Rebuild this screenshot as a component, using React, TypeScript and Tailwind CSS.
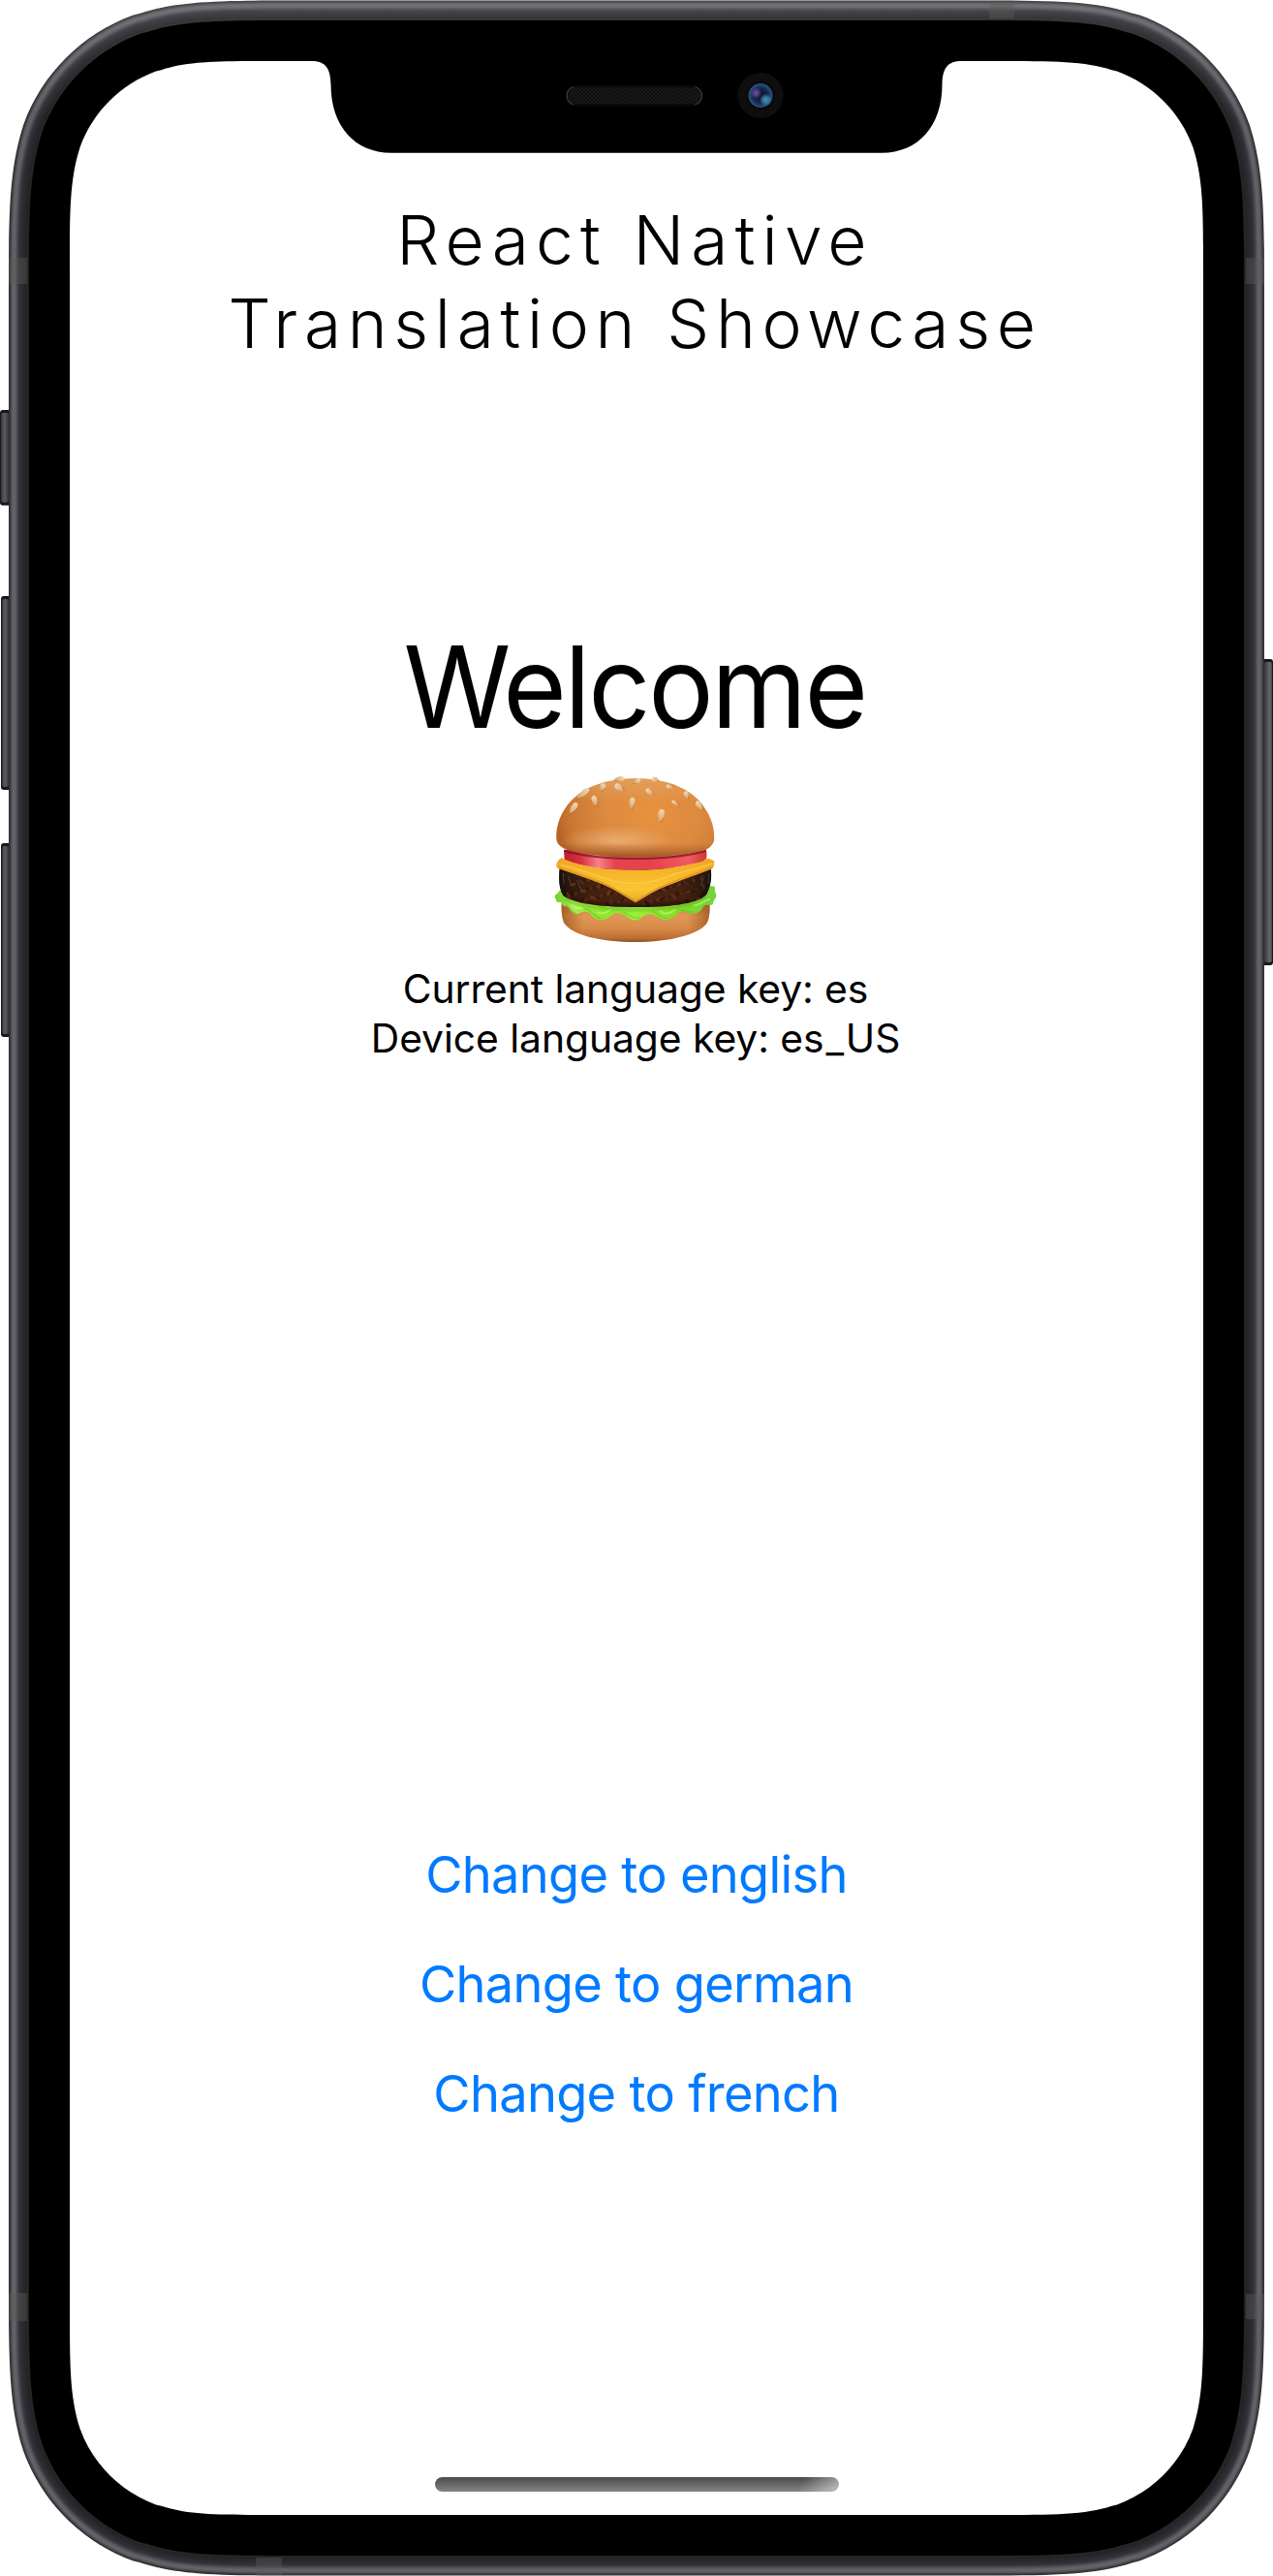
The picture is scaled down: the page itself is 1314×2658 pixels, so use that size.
import type { ReactNode } from 'react';

const FRAME_W = 1314;
const FRAME_H = 2658;

type Point = [number, number];

/** One smoothed corner, in units of the corner radius, from the horizontal edge to the vertical one. */
const CORNER: Point[] = [
  [1.52866, 0],
  [1.08849, 0],
  [0.8684, 0],
  [0.66993, 0.0655],
  [0.63149, 0.07491],
  [0.37282, 0.16906],
  [0.16906, 0.37282],
  [0.07491, 0.63149],
  [0, 0.8684],
  [0, 1.08849],
  [0, 1.52866],
];

/** Rounded rectangle with continuous (smoothed) corners. */
function squircle(x0: number, y0: number, x1: number, y1: number, r: number) {
  const corner = (map: (p: Point) => Point, reverse: boolean) => {
    const p = CORNER.map((c) => map(c).map((v) => v.toFixed(2)).join(' '));
    return reverse
      ? `${p[10]}C${p[9]} ${p[8]} ${p[7]}C${p[6]} ${p[5]} ${p[4]}L${p[3]}C${p[2]} ${p[1]} ${p[0]}`
      : `${p[0]}C${p[1]} ${p[2]} ${p[3]}L${p[4]}C${p[5]} ${p[6]} ${p[7]}C${p[8]} ${p[9]} ${p[10]}`;
  };
  return `M${corner(([a, b]) => [x0 + a * r, y0 + b * r], true)}L${corner(
    ([a, b]) => [x1 - a * r, y0 + b * r],
    false,
  )}L${corner(([a, b]) => [x1 - a * r, y1 - b * r], true)}L${corner(
    ([a, b]) => [x0 + a * r, y1 - b * r],
    false,
  )}Z`;
}

/** Metal edge shades from the outside in, one per pixel of depth. */
const METAL = [
  '#2f2f32', '#3c3c3f', '#4c4c50', '#5b5a60', '#626167', '#646369', '#605f65', '#58575d',
  '#4c4b51', '#3f3e44', '#37363c', '#323138', '#2f2e35', '#2d2c33', '#2b2a31', '#29282f',
  '#28272d', '#26252b', '#232227', '#2a2a25', '#22221d',
];

function SideButton({ x, y, w, h, side }: { x: number; y: number; w: number; h: number; side: 'left' | 'right' }) {
  return (
    <g>
      <rect x={side === 'left' ? x : x - 3} y={y} width={w + 3} height={h} rx="3" fill="#17171c" />
      <rect
        x={side === 'left' ? x + 1 : x}
        y={y + 3}
        width={w - 1}
        height={h - 6}
        rx="2"
        fill={side === 'left' ? 'url(#btnL)' : 'url(#btnR)'}
      />
    </g>
  );
}

function DeviceFrame() {
  return (
    <svg
      className="pointer-events-none absolute inset-0"
      width={FRAME_W}
      height={FRAME_H}
      viewBox="0 0 1314 2658"
      aria-hidden="true"
    >
      <defs>
        <linearGradient id="btnL">
          <stop offset="0" stopColor="#35353a" />
          <stop offset=".45" stopColor="#5b5b61" />
          <stop offset="1" stopColor="#36363b" />
        </linearGradient>
        <linearGradient id="btnR">
          <stop offset="0" stopColor="#38383c" />
          <stop offset=".75" stopColor="#68686d" />
          <stop offset="1" stopColor="#444449" />
        </linearGradient>
        <linearGradient id="shine" gradientUnits="userSpaceOnUse" x1="0" y1="0" x2="0" y2="120">
          <stop offset="0" stopColor="#fff" stopOpacity=".1" />
          <stop offset="1" stopColor="#fff" stopOpacity="0" />
        </linearGradient>
        <pattern id="mesh" width="4" height="4" patternUnits="userSpaceOnUse">
          <rect width="4" height="4" fill="#191919" />
          <rect width="2" height="2" fill="#101010" />
          <rect x="2" y="2" width="2" height="2" fill="#101010" />
        </pattern>
        <radialGradient id="lens">
          <stop offset="0" stopColor="#0c1226" />
          <stop offset=".6" stopColor="#14264a" />
          <stop offset="1" stopColor="#2c5484" />
        </radialGradient>
        <radialGradient id="violet">
          <stop offset="0" stopColor="#7a52ae" />
          <stop offset="1" stopColor="#7a52ae" stopOpacity="0" />
        </radialGradient>
        <radialGradient id="teal">
          <stop offset="0" stopColor="#3f8fb0" />
          <stop offset=".5" stopColor="#3a7fa3" stopOpacity=".85" />
          <stop offset="1" stopColor="#3a7fa3" stopOpacity="0" />
        </radialGradient>
      </defs>

      <SideButton x={0} y={423} w={9} h={98.5} side="left" />
      <SideButton x={1} y={615} w={8} h={200} side="left" />
      <SideButton x={1} y={870} w={8} h={200} side="left" />
      <SideButton x={1305} y={680} w={9} h={316} side="right" />

      {METAL.map((color, d) => (
        <path key={d} d={squircle(9 + d, 0.5 + d, 1305 - d, 2657.5 - d, 203 - d)} fill={color} />
      ))}
      <path d={squircle(9, 0.5, 1305, 2657.5, 203)} fill="url(#shine)" />

      <g fill="#5a5a58" fillOpacity=".42">
        <rect x="9" y="266" width="19" height="27" />
        <rect x="1286" y="266" width="19" height="27" />
        <rect x="9" y="2366" width="19" height="29" />
        <rect x="1286" y="2367" width="19" height="26" />
        <rect x="1021" y="2" width="26" height="17" />
        <rect x="264" y="2639" width="27" height="18" />
      </g>

      <path d={squircle(30, 21, 1284, 2637, 182)} fill="#000" />
      <path d={squircle(72, 63, 1242, 2595, 141)} fill="#fff" />
      <path
        d="M318 62V63H321C336 63 341 70 341.5 87C341.5 130 366 157.7 404 157.7H910C948 157.7 972.5 130 972.5 87C973 70 978 63 993 63H996V62Z"
        fill="#000"
      />

      <rect x="584.5" y="88" width="140.5" height="21.5" rx="10.75" fill="#0b0b0b" />
      <rect x="587" y="90.5" width="135.5" height="16.5" rx="8.25" fill="url(#mesh)" />
      <path
        d="M592 89.5A11 10 0 0 0 592 108M717.5 89.5A11 10 0 0 1 717.5 108"
        fill="none"
        stroke="#3c3c3c"
        strokeWidth="1.3"
      />

      <circle cx="785" cy="98.5" r="23.5" fill="#0e0e0e" />
      <circle cx="785" cy="98.5" r="14.5" fill="#080809" />
      <circle cx="785" cy="98.5" r="12.5" fill="url(#lens)" />
      <circle cx="780.5" cy="96" r="6" fill="url(#violet)" />
      <circle cx="790.5" cy="103" r="6.5" fill="url(#teal)" />
    </svg>
  );
}

/** Sesame seeds: centre x, centre y, half width, half length, rotation. */
const SEEDS = [
  [185, 117, 8, 24, 50],
  [155, 162, 8, 20, 35],
  [246, 97, 8, 12, 20],
  [222, 139, 8, 17, -18],
  [298, 98, 9, 16, -55],
  [298, 71, 7, 15, 85],
  [352, 78, 7, 12, 65],
  [337, 146, 8, 18, 8],
  [392, 112, 7, 15, -48],
  [409, 74, 7, 11, -60],
  [427, 185, 9, 20, 10],
  [455, 95, 6, 12, -75],
  [471, 146, 5, 13, -52],
  [506, 121, 7, 12, -15],
  [546, 153, 8, 16, -35],
];

/** Patty crumbs: x, y, rx, ry, tone. */
const CRUMBS = Array.from({ length: 110 }, (_, i) => {
  const x = 125 + ((i * 73.7) % 450);
  const y = 370 + ((i * 41.3) % 92);
  return [x, y, 4 + (i % 5) * 2, 3 + (i % 3), i % 4] as const;
});

const TOP_BUN =
  'M103 258C101 225 110 188 137 152C178 100 250 71 348 70C452 71 520 104 556 152C584 190 594 225 591 264C584 280 574 286 562 292C500 308 420 313 347 313C270 313 190 306 136 290C114 282 105 272 103 258Z';
const BOTTOM_BUN =
  'M119 455C118 480 120 500 126 516C150 555 240 576 347 576C456 576 545 553 570 516C577 500 579 475 577 450Z';

function Burger() {
  return (
    <svg className="mr-1" role="img" aria-label="Burger" width="230" height="210" viewBox="0 0 690 630">
      <defs>
        <radialGradient id="bun" gradientUnits="userSpaceOnUse" cx="400" cy="175" r="300" gradientTransform="matrix(1 0 0 .9 0 15)">
          <stop offset="0" stopColor="#e8923e" />
          <stop offset=".5" stopColor="#dc8a40" />
          <stop offset=".85" stopColor="#cb7733" />
          <stop offset="1" stopColor="#b76227" />
        </radialGradient>
        <linearGradient id="bunShade" x2="0" y2="1">
          <stop offset="0" stopColor="#e3a45f" stopOpacity=".8" />
          <stop offset=".3" stopColor="#e3a45f" stopOpacity="0" />
          <stop offset=".82" stopColor="#a9602c" stopOpacity="0" />
          <stop offset="1" stopColor="#985022" stopOpacity=".9" />
        </linearGradient>
        <radialGradient id="bunGlow">
          <stop offset="0" stopColor="#f0b882" stopOpacity=".7" />
          <stop offset="1" stopColor="#f0b882" stopOpacity="0" />
        </radialGradient>
        <linearGradient id="tomato">
          <stop offset="0" stopColor="#b82030" />
          <stop offset=".12" stopColor="#d8303f" />
          <stop offset=".24" stopColor="#f5828a" />
          <stop offset=".36" stopColor="#e5444f" />
          <stop offset=".6" stopColor="#e7404c" />
          <stop offset=".87" stopColor="#f05a60" />
          <stop offset="1" stopColor="#cc3a30" />
        </linearGradient>
        <linearGradient id="cheese" x2="0" y2="1">
          <stop offset="0" stopColor="#f0a526" />
          <stop offset=".35" stopColor="#f8b62a" />
          <stop offset=".7" stopColor="#fac534" />
          <stop offset="1" stopColor="#eaa71f" />
        </linearGradient>
        <linearGradient id="patty">
          <stop offset="0" stopColor="#1c120e" />
          <stop offset=".2" stopColor="#42200f" />
          <stop offset=".5" stopColor="#4a2413" />
          <stop offset=".8" stopColor="#45210f" />
          <stop offset="1" stopColor="#1d1510" />
        </linearGradient>
        <linearGradient id="lettuce">
          <stop offset="0" stopColor="#6fcf28" />
          <stop offset=".12" stopColor="#a5ee4e" />
          <stop offset=".3" stopColor="#8be62c" />
          <stop offset=".5" stopColor="#9cf03c" />
          <stop offset=".75" stopColor="#84dd2b" />
          <stop offset="1" stopColor="#74d13a" />
        </linearGradient>
        <linearGradient id="base" x2="0" y2="1">
          <stop offset="0" stopColor="#b9692f" />
          <stop offset=".35" stopColor="#e09857" />
          <stop offset=".65" stopColor="#d98b49" />
          <stop offset=".9" stopColor="#bd6f34" />
          <stop offset="1" stopColor="#93511f" />
        </linearGradient>
        <linearGradient id="baseSide">
          <stop offset="0" stopColor="#a0571f" stopOpacity=".8" />
          <stop offset=".15" stopColor="#a0571f" stopOpacity="0" />
          <stop offset=".85" stopColor="#a0571f" stopOpacity="0" />
          <stop offset="1" stopColor="#a0571f" stopOpacity=".8" />
        </linearGradient>
        <linearGradient id="seed" x2="0" y2="1">
          <stop offset="0" stopColor="#f3d9b4" />
          <stop offset="1" stopColor="#d3a574" />
        </linearGradient>
        <filter id="soft" x="-20%" y="-20%" width="140%" height="140%">
          <feGaussianBlur stdDeviation="4" />
        </filter>
        <clipPath id="pattyClip">
          <path d="M113 348C109 385 112 414 124 432C160 460 260 468 348 468C440 468 540 460 568 428C582 400 586 370 580 345Z" />
        </clipPath>
      </defs>

      <path d={BOTTOM_BUN} fill="url(#base)" />
      <path d={BOTTOM_BUN} fill="url(#baseSide)" />

      <path
        d="M116 415C108 420 108 427 99 431C95 440 106 444 103 452L117 453C120 462 126 467 134 466C143 468 148 488 162 489C178 490 182 479 197 483C212 486 216 505 235 507C252 509 268 500 276 491C290 484 306 486 319 495C330 505 346 513 358 506C370 497 382 488 396 490C414 492 424 509 444 507C466 503 474 490 487 483C500 476 506 489 520 489C540 490 554 479 558 466C566 457 580 466 588 458C587 448 600 440 598 430C594 420 592 412 594 404L578 402L560 436L348 466L134 438Z"
        fill="url(#lettuce)"
      />
      <path
        d="M134 462C146 470 150 486 163 486M190 474C212 474 220 500 240 503M310 484C330 490 340 506 358 501M400 482C420 486 426 504 446 502M486 478C502 474 508 484 524 484"
        fill="none"
        stroke="#56b313"
        strokeLinecap="round"
        strokeWidth="4"
        opacity=".45"
      />
      <path
        d="M150 462C158 470 166 474 180 470M232 484C246 492 262 484 270 476M424 480C440 492 458 488 470 476M530 462C548 462 560 446 576 444"
        fill="none"
        stroke="#c9fb7d"
        strokeWidth="6"
        strokeLinecap="round"
        opacity=".6"
      />
      <path d="M128 442C180 470 270 476 348 476C440 476 520 468 566 436" fill="none" stroke="#4d9412" strokeWidth="7" opacity=".5" filter="url(#soft)" />

      <g clipPath="url(#pattyClip)">
        <rect x="105" y="340" width="485" height="132" fill="url(#patty)" />
        {CRUMBS.map(([x, y, rx, ry, tone], i) => (
          <ellipse
            key={i}
            cx={x}
            cy={y}
            rx={rx}
            ry={ry}
            transform={`rotate(${(i * 37) % 180} ${x} ${y})`}
            fill={tone === 0 ? '#74371c' : tone === 1 ? '#26120b' : tone === 2 ? '#5c2b17' : '#351a10'}
            opacity=".7"
          />
        ))}
        <path d="M112 345C110 400 114 425 130 442M582 345C584 395 578 420 560 442" fill="none" stroke="#15100d" strokeWidth="22" opacity=".7" filter="url(#soft)" />
        <path d="M124 362L126 398M140 372L150 404M166 385L182 420M576 362L573 396M558 376L552 402" stroke="#77706a" strokeWidth="3" opacity=".45" />
        <path d="M120 446C200 474 480 474 570 442" fill="none" stroke="#160b06" strokeWidth="14" opacity=".65" filter="url(#soft)" />
      </g>

      <path d="M126 290L566 288C570 300 569 312 566 326C480 346 420 352 347 353C260 353 190 346 128 322Z" fill="url(#tomato)" />
      <path d="M127 294C200 314 270 318 347 318C430 318 500 312 566 294" fill="none" stroke="#7d1420" strokeWidth="6" opacity=".75" />

      <path
        d="M120 316C112 318 106 326 103 336C102 342 104 346 108 348C160 366 216 384 252 400C288 416 320 438 348 454C376 438 404 418 440 404C484 386 540 366 584 350C591 346 591 336 592 328C590 322 580 318 566 318C560 322 558 324 556 326C480 346 420 353 347 353C260 353 190 346 132 322Z"
        fill="url(#cheese)"
      />
      <path d="M108 345C160 362 216 380 252 396C288 412 320 434 348 450C376 434 404 414 440 400C484 382 540 362 586 345" fill="none" stroke="#d98f1a" strokeWidth="5" opacity=".8" />
      <path d="M118 338C180 350 230 372 262 382C300 394 318 394 348 394C400 394 430 378 470 366C520 352 560 344 586 332" fill="none" stroke="#ffd862" strokeWidth="4" opacity=".55" />

      <path d={TOP_BUN} fill="url(#bun)" />
      <ellipse cx="290" cy="262" rx="180" ry="46" fill="url(#bunGlow)" />
      <path d={TOP_BUN} fill="url(#bunShade)" />
      {SEEDS.map(([x, y, rx, ry, a]) => (
        <g key={`${x}-${y}`} transform={`translate(${x} ${y}) rotate(${a})`}>
          <path
            d={`M2 ${-ry + 3}C${rx + 3} ${-ry + 3} ${rx + 3} ${ry * 0.4} 2 ${ry + 3}C${-rx} ${ry * 0.4} ${-rx} ${-ry + 3} 2 ${-ry + 3}Z`}
            fill="#9c5a24"
            opacity=".5"
          />
          <path
            d={`M0 ${-ry}C${rx * 1.5} ${-ry} ${rx * 1.3} ${ry * 0.3} 0 ${ry}C${-rx * 1.3} ${ry * 0.3} ${-rx * 1.5} ${-ry} 0 ${-ry}Z`}
            fill="url(#seed)"
          />
        </g>
      ))}
    </svg>
  );
}

function LinkButton({ children }: { children: ReactNode }) {
  return (
    <button
      type="button"
      className="text-[52.4px] leading-[64px] tracking-[-0.7px] whitespace-nowrap text-[#007aff]"
    >
      {children}
    </button>
  );
}

export default function App() {
  return (
    <div className="relative h-[2658px] w-[1314px] overflow-hidden bg-white font-['Inter',sans-serif] text-black">
      <DeviceFrame />
      <main className="relative flex h-full flex-col items-center pt-[205px]">
        <h1 className="pr-[3px] text-center text-[69.5px] leading-[86px] font-light whitespace-nowrap">
          <span className="block tracking-[7.13px]">React Native</span>
          <span className="block tracking-[6.65px]">Translation Showcase</span>
        </h1>

        <section className="mt-[260px] flex flex-col items-center">
          <h2 className="mr-1 scale-x-[0.962] text-[117px] leading-[143px] tracking-[-2.5px]">Welcome</h2>
          <Burger />
          <div className="mt-[5px] mr-0.5 text-center text-[40.8px] leading-[51px] whitespace-nowrap">
            <p className="tracking-[-0.08px]">Current language key: es</p>
            <p className="tracking-[-0.05px]">
              Device language key: e<span className="tracking-[1.8px]">s_</span>US
            </p>
          </div>
        </section>

        <nav className="mt-[805px] flex flex-col items-center gap-[49px]">
          <LinkButton>Change to english</LinkButton>
          <LinkButton>Change to german</LinkButton>
          <LinkButton>Change to french</LinkButton>
        </nav>

        <div className="mt-[364px] h-[15px] w-[417px] rounded-full bg-[linear-gradient(115deg,transparent_90%,rgba(255,255,255,0.5)_100%),linear-gradient(#4a4a4a,#858585)]" />
      </main>
    </div>
  );
}
